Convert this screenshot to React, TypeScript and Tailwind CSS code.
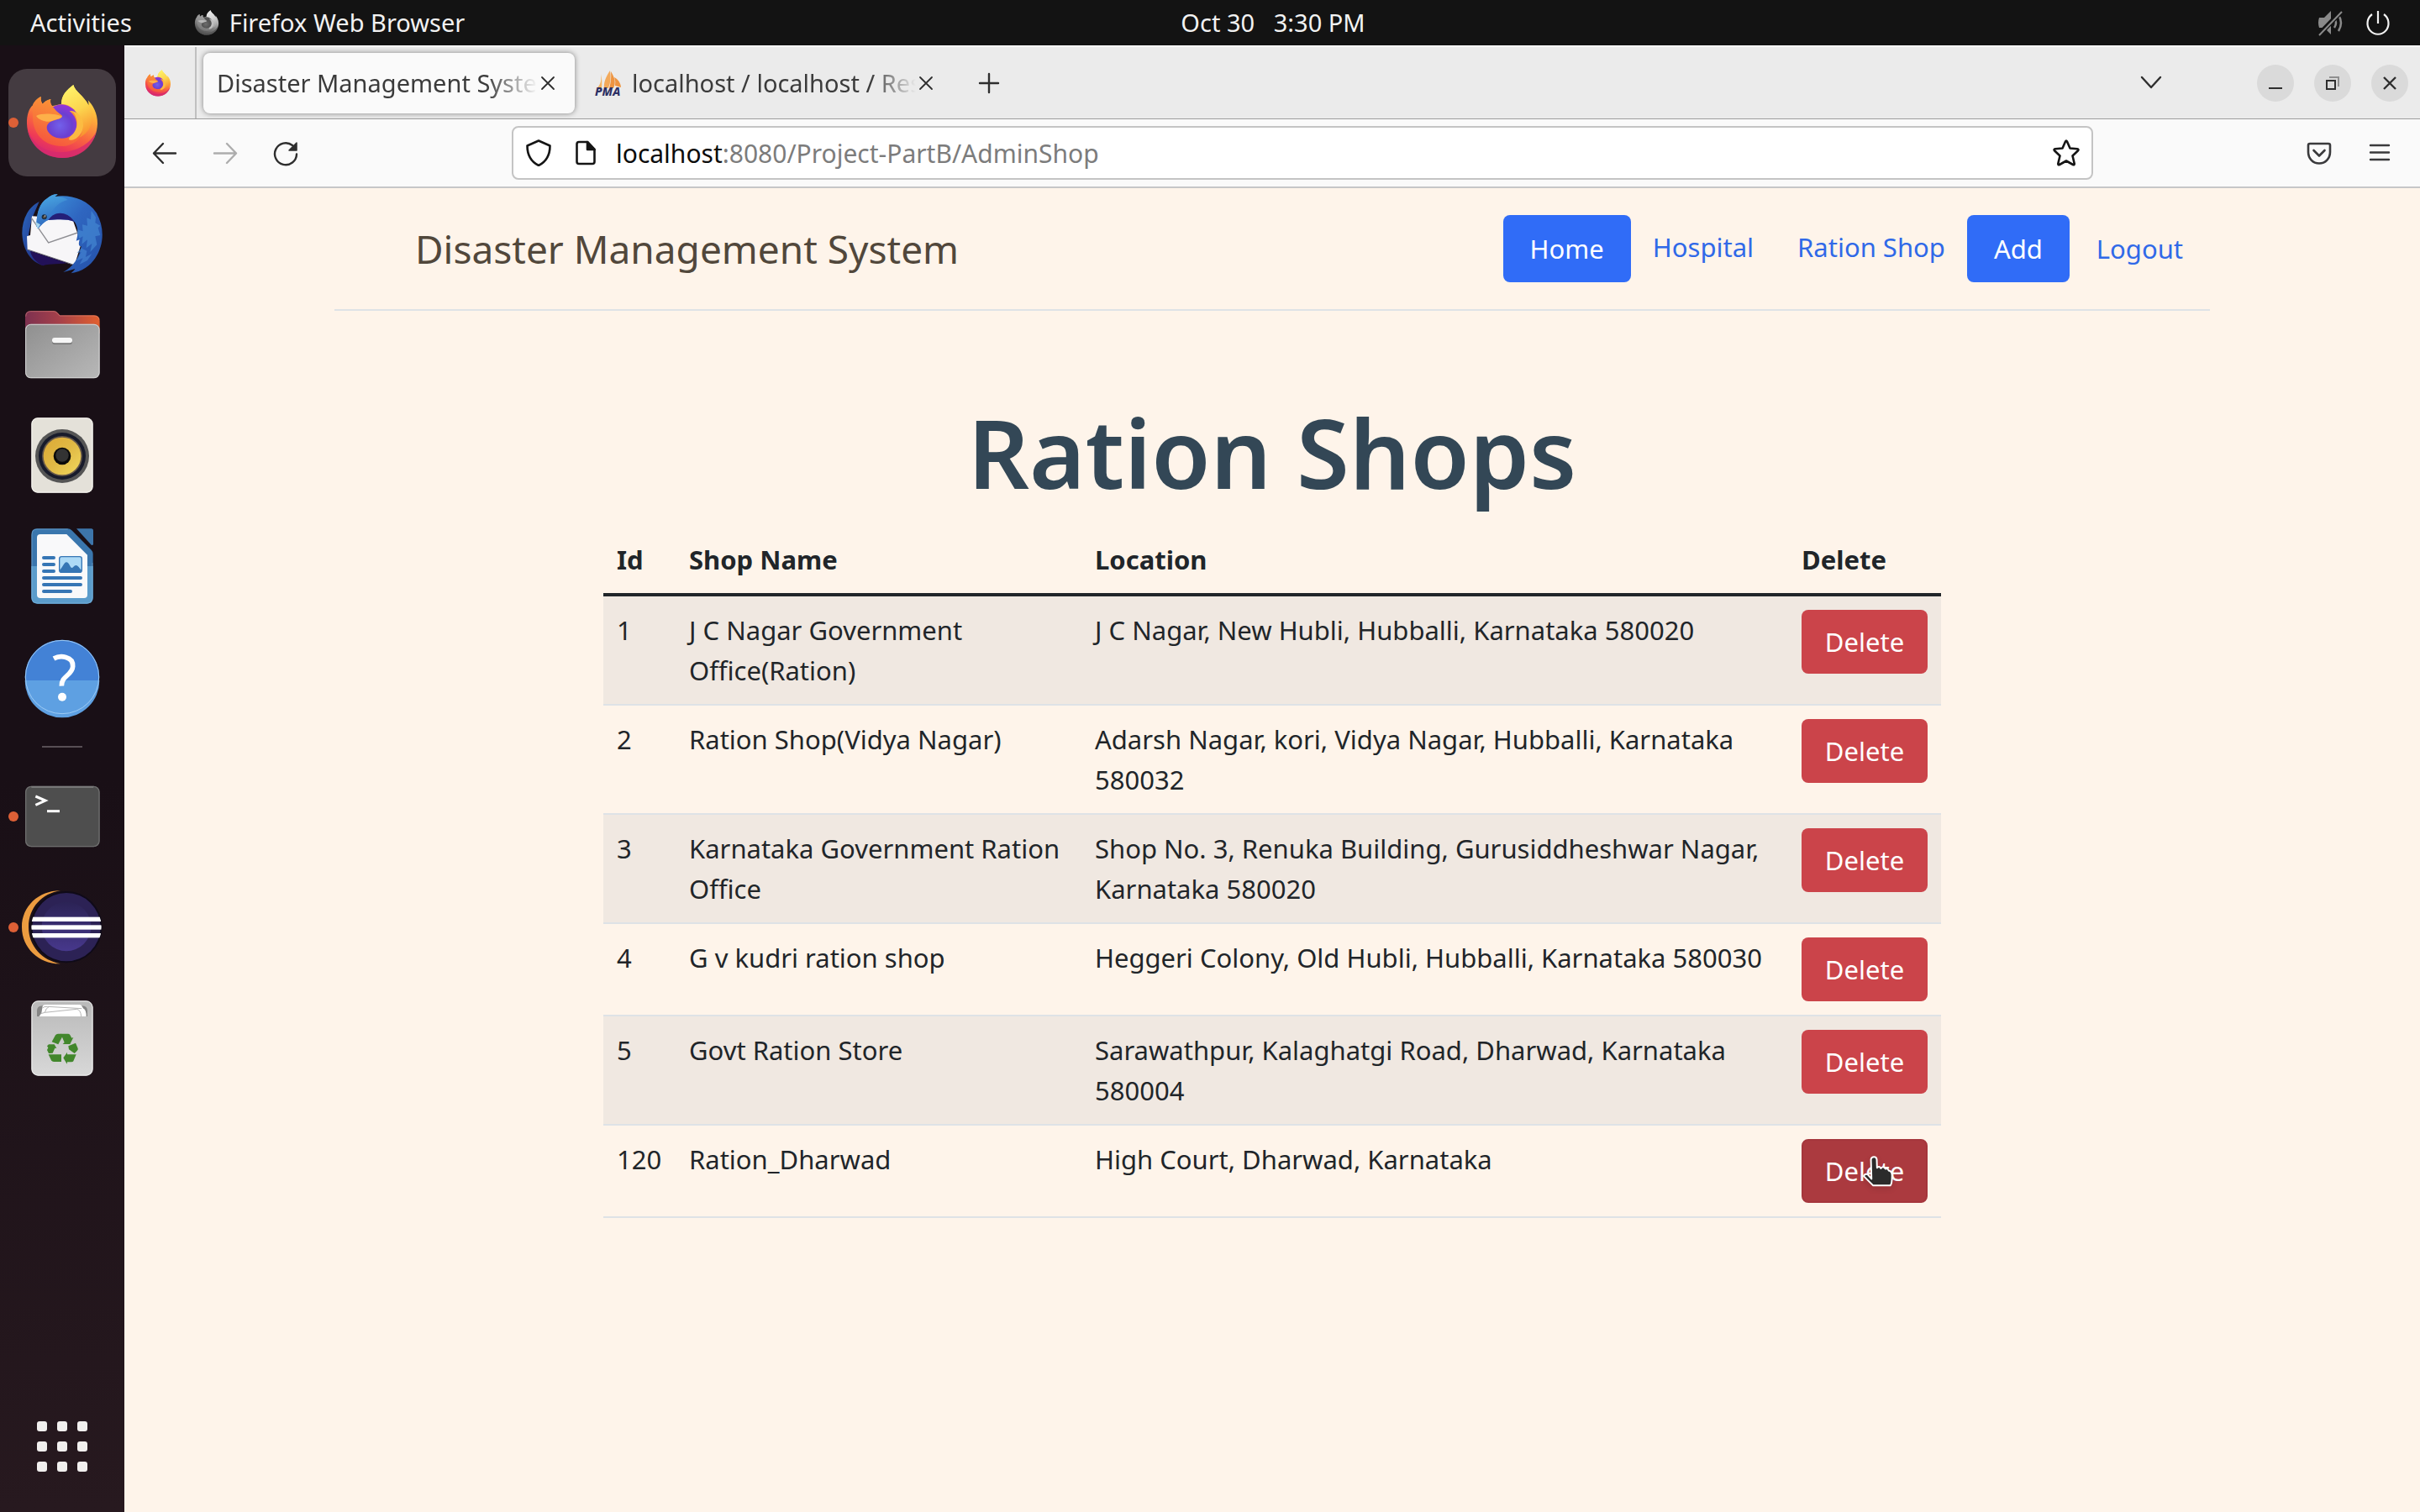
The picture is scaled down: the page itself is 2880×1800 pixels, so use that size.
import React from "react";

const shops = [
  { id: "1", name: "J C Nagar Government Office(Ration)", location: "J C Nagar, New Hubli, Hubballi, Karnataka 580020" },
  { id: "2", name: "Ration Shop(Vidya Nagar)", location: "Adarsh Nagar, kori, Vidya Nagar, Hubballi, Karnataka 580032" },
  { id: "3", name: "Karnataka Government Ration Office", location: "Shop No. 3, Renuka Building, Gurusiddheshwar Nagar, Karnataka 580020" },
  { id: "4", name: "G v kudri ration shop", location: "Heggeri Colony, Old Hubli, Hubballi, Karnataka 580030" },
  { id: "5", name: "Govt Ration Store", location: "Sarawathpur, Kalaghatgi Road, Dharwad, Karnataka 580004" },
  { id: "120", name: "Ration_Dharwad", location: "High Court, Dharwad, Karnataka" },
];

function FirefoxArt({ id }: { id: string }) {
  return (
    <>
      <defs>
        <linearGradient id={id + "body"} x1="0.75" y1="0.05" x2="0.35" y2="1">
          <stop offset="0" stopColor="#fff04f" />
          <stop offset="0.3" stopColor="#fdae3a" />
          <stop offset="0.6" stopColor="#f9663f" />
          <stop offset="0.82" stopColor="#ee3a56" />
          <stop offset="1" stopColor="#d32676" />
        </linearGradient>
        <linearGradient id={id + "flame"} x1="0.3" y1="0" x2="0.6" y2="1">
          <stop offset="0" stopColor="#fff36a" />
          <stop offset="0.5" stopColor="#fcd54e" />
          <stop offset="1" stopColor="#f9912f" />
        </linearGradient>
        <linearGradient id={id + "head"} x1="0.6" y1="0" x2="0.2" y2="1">
          <stop offset="0" stopColor="#fb9a35" />
          <stop offset="0.5" stopColor="#f87a3a" />
          <stop offset="1" stopColor="#f5503f" />
        </linearGradient>
        <radialGradient id={id + "globe"} cx="0.45" cy="0.62" r="0.65">
          <stop offset="0" stopColor="#7260ea" />
          <stop offset="0.55" stopColor="#6b3fd0" />
          <stop offset="1" stopColor="#9a35d8" />
        </radialGradient>
      </defs>
      <path d="M262 123C268 148 300 162 316 196C317 190 316 184 314 178C330 194 349 224 348 262C346 332 290 384 222 384C152 384 98 330 96 262C95 232 104 206 117 196C121 184 132 172 146 165C145 176 147 185 152 191C158 184 168 177 181 174C178 184 180 194 186 199L220 191C218 160 240 140 262 123Z" fill={"url(#" + id + "body)"} />
      <path d="M98 280C120 344 170 368 226 363C290 358 330 320 344 290C330 348 282 384 222 384C158 384 108 342 98 280Z" fill="#d42a6e" opacity="0.8" />
      <path d="M262 123C268 148 300 162 316 196C340 240 330 290 282 312C304 280 298 240 268 216C256 200 238 190 219 192C218 160 240 140 262 123Z" fill={"url(#" + id + "flame)"} />
      <circle cx="220" cy="254" r="61" fill={"url(#" + id + "globe)"} />
      <path d="M117 196C121 184 132 172 146 165C145 176 147 185 152 191C158 184 168 177 181 174C178 186 184 198 194 208C204 222 222 230 222 235C220 244 200 248 186 252C164 262 160 280 180 302C205 320 245 318 264 296C280 276 278 240 248 216C268 214 292 236 296 266C298 312 264 342 220 342C160 342 118 300 117 240Z" fill={"url(#" + id + "head)"} />
      <path d="M248 217C272 213 296 236 297 268C297 288 286 304 272 314C250 326 240 320 250 308C282 284 280 244 262 222Z" fill="#fcc544" opacity="0.85" />
      <path d="M129 234C150 222 200 226 222 236C216 246 198 245 186 252C172 258 140 252 129 234Z" fill="#fdb049" />
    </>
  );
}

function Firefox({ id, className }: { id: string; className: string }) {
  return (
    <svg viewBox="90 120 264 268" className={className} aria-hidden="true">
      <FirefoxArt id={id} />
    </svg>
  );
}

function DockItem({ label, viewBox, active, running, children }: { label: string; viewBox: string; active?: boolean; running?: boolean; children: React.ReactNode }) {
  return (
    <button aria-label={label} className={active ? "relative block size-32 rounded-[22px] bg-[#443b41]" : "relative block size-32 rounded-[22px]"}>
      {running && <span className="absolute top-[58px] left-0 size-3 rounded-full bg-[#dd6036]" />}
      <svg viewBox={viewBox} className="size-32" aria-hidden="true">{children}</svg>
    </button>
  );
}

function Dock() {
  return (
    <nav aria-label="Dock" className="flex w-[148px] shrink-0 flex-col items-center gap-1 bg-linear-to-b from-[#190f16] from-50% to-[#27191f] pt-7 pb-[14px]">
      <DockItem label="Firefox" viewBox="30 66 384 384" active running>
        <FirefoxArt id="dockfx" />
      </DockItem>

      <DockItem label="Thunderbird" viewBox="30 462 384 384">
        <defs>
          <linearGradient id="tb1" x1="0" y1="0" x2="1" y2="1">
            <stop offset="0" stopColor="#3f9be0" />
            <stop offset="0.45" stopColor="#2f66c0" />
            <stop offset="1" stopColor="#2450a8" />
          </linearGradient>
          <linearGradient id="tb2" x1="0" y1="0" x2="1" y2="1">
            <stop offset="0" stopColor="#2b6cc4" />
            <stop offset="1" stopColor="#1f1f72" />
          </linearGradient>
          <linearGradient id="tb3" x1="0.2" y1="0" x2="0.5" y2="1">
            <stop offset="0" stopColor="#4aa9e4" />
            <stop offset="1" stopColor="#2d62bb" />
          </linearGradient>
        </defs>
        <path d="M140 540C100 560 78 605 79 655C82 715 110 755 154 769C120 735 112 712 108 690C96 670 104 650 114 600Z" fill="url(#tb2)" />
        <path d="M114 592L258 600L290 690L266 767L98 712L96 664L108 660Z" fill="#f7f6f8" />
        <path d="M112 598L173 687L286 648" fill="none" stroke="#8e8e93" strokeWidth="4" />
        <path d="M98 711L264 766" stroke="#6b6b75" strokeWidth="3" />
        <path d="M108 716L240 760C200 764 170 762 154 769C128 756 112 738 108 716Z" fill="#221158" />
        <path d="M130 628C130 590 138 548 166 530C182 516 196 512 206 514L196 522C250 514 310 530 344 580C372 628 374 690 340 742C322 770 292 790 254 796C262 788 266 784 268 780L226 792C262 772 284 740 290 700C280 700 280 690 284 676L272 680C282 650 276 626 266 612C240 600 200 604 172 606C156 612 146 626 136 636Z" fill="url(#tb1)" />
        <path d="M130 628C130 590 138 548 166 530C182 516 196 512 206 514L196 522C216 522 232 526 242 534C206 542 182 570 172 606C156 612 146 626 136 636Z" fill="url(#tb3)" />
        <path d="M172 606C196 570 240 574 266 612C240 600 200 604 172 606Z" fill="#241f78" />
        <path d="M326 572L324 604L310 598L312 626L294 622L296 646L276 640L282 672L296 664L292 692L312 676L308 706L328 690L322 720L346 694L340 664L358 660L350 634L358 626L340 616L342 596Z" fill="#4a94da" opacity="0.55" />
        <path d="M290 706L274 724L290 720L272 752L296 742L284 764L312 750L328 726L306 738L310 716Z" fill="#4789d6" opacity="0.6" />
        <path d="M126 612L144 622L134 638Z" fill="#a7d5ec" />
        <circle cx="158" cy="595" r="9" fill="#1b2a3c" />
        <circle cx="158" cy="595" r="5" fill="#5b5446" />
        <circle cx="161" cy="591" r="2" fill="#ffffff" />
      </DockItem>

      <DockItem label="Files" viewBox="30 858 384 384">
        <defs>
          <linearGradient id="fo1" x1="0" y1="0" x2="1" y2="0">
            <stop offset="0" stopColor="#7d3150" />
            <stop offset="0.45" stopColor="#a5404a" />
            <stop offset="1" stopColor="#e2602f" />
          </linearGradient>
          <linearGradient id="fo2" x1="0" y1="0" x2="1" y2="1">
            <stop offset="0" stopColor="#8f8f8f" />
            <stop offset="1" stopColor="#b8b8b8" />
          </linearGradient>
        </defs>
        <path d="M90 1010V950Q90 930 110 930H192Q200 930 205 936L214 946H336Q356 946 356 966V1010Z" fill="url(#fo1)" />
        <path d="M92 950Q93 932 110 932H192Q199 932 204 938L213 948H336Q352 948 354 962" fill="none" stroke="#e99a86" strokeWidth="2" opacity="0.7" />
        <rect x="90" y="977" width="266" height="194" rx="20" fill="url(#fo2)" />
        <rect x="92" y="979" width="262" height="190" rx="18" fill="none" stroke="#d3d3d3" strokeWidth="3" />
        <rect x="186" y="1031" width="72" height="19" rx="9" fill="#777777" />
        <rect x="186" y="1026" width="72" height="19" rx="9" fill="#f6f6f6" />
      </DockItem>

      <DockItem label="Rhythmbox" viewBox="30 24 384 384">
        <defs>
          <linearGradient id="rb" x1="0" y1="0" x2="1" y2="1">
            <stop offset="0" stopColor="#dda935" />
            <stop offset="0.5" stopColor="#e0b945" />
            <stop offset="1" stopColor="#f2d95e" />
          </linearGradient>
        </defs>
        <rect x="112" y="82" width="220" height="268" rx="22" fill="#e4e1d9" />
        <rect x="114" y="84" width="216" height="264" rx="20" fill="none" stroke="#f6f5f1" strokeWidth="3" />
        <circle cx="222" cy="219" r="96" fill="#555555" />
        <circle cx="222" cy="219" r="84" fill="#181b2b" />
        <circle cx="222" cy="219" r="72" fill="#66584a" />
        <circle cx="222" cy="219" r="67" fill="url(#rb)" />
        <circle cx="222" cy="219" r="31" fill="#0a0a0a" />
        <circle cx="222" cy="216" r="23" fill="#333333" />
      </DockItem>

      <DockItem label="LibreOffice Writer" viewBox="30 420 384 384">
        <path d="M132 478H242Q250 478 256 484L326 554Q332 560 332 568V724Q332 746 310 746H134Q112 746 112 724V500Q112 478 132 478Z" fill="#3a76ad" />
        <path d="M112 612H332V724Q332 746 310 746H134Q112 746 112 724Z" fill="#5b9ccb" />
        <path d="M114 724V500Q114 480 132 480H242M330 600V724Q330 744 310 744H134Q114 744 114 724" fill="none" stroke="#8fc0e0" strokeWidth="2" opacity="0.7" />
        <path d="M273 478H326Q333 478 333 486V532Q333 540 326 536Z" fill="#3d75aa" />
        <path d="M144 498H238L312 572V714Q312 726 300 726H144Q132 726 132 714V510Q132 498 144 498Z" fill="#f9f9fa" />
        <g stroke="#3676b5" strokeWidth="12" strokeLinecap="round">
          <path d="M156 582H192M156 606H192M156 630H192M156 654H288M156 678H288M156 702H252" />
        </g>
        <rect x="212" y="578" width="80" height="56" rx="8" fill="#addaf6" stroke="#3676b5" strokeWidth="4" />
        <path d="M213 626C222 620 228 598 237 598C247 598 250 618 257 618C262 618 264 609 271 609C280 609 284 622 291 626V630Q291 634 286 634H218Q213 634 213 628Z" fill="#3676b5" />
      </DockItem>

      <DockItem label="Help" viewBox="30 816 384 384">
        <circle cx="222" cy="1008" r="133" fill="#4382d6" />
        <path d="M89 1020H355A133 133 0 0 1 89 1020Z" fill="#5ea0e2" />
        <circle cx="222" cy="1008" r="131" fill="none" stroke="#9dcbf5" strokeWidth="3" />
        <path d="M192 942C214 930 262 932 260 970C258 1002 218 1004 220 1040" fill="none" stroke="#ffffff" strokeWidth="17" />
        <circle cx="222" cy="1079" r="15" fill="#ffffff" />
      </DockItem>

      <div className="my-[14px] h-0.5 w-12 bg-[#574e54]" />

      <DockItem label="Terminal" viewBox="30 84 384 384" running>
        <rect x="90" y="167" width="266" height="218" rx="22" fill="#4e4e4e" />
        <rect x="92" y="169" width="262" height="214" rx="20" fill="none" stroke="#6d6d6d" strokeWidth="4" />
        <path d="M112 171H334" stroke="#828282" strokeWidth="4" />
        <path d="M127 204L162 219L127 235" fill="none" stroke="#ffffff" strokeWidth="9" />
        <path d="M168 257H213" stroke="#ffffff" strokeWidth="9" />
      </DockItem>

      <DockItem label="Eclipse" viewBox="30 480 384 384" running>
        <defs>
          <linearGradient id="ec" x1="0" y1="0" x2="0" y2="1">
            <stop offset="0" stopColor="#2b2355" />
            <stop offset="1" stopColor="#47388c" />
          </linearGradient>
          <clipPath id="ecclip"><circle cx="237" cy="671" r="125" /></clipPath>
        </defs>
        <path d="M216 541C140 540 78 596 78 671C78 746 140 804 216 802C152 790 102 740 102 671C102 602 150 550 216 541Z" fill="#ec9c40" />
        <circle cx="237" cy="671" r="128" fill="#0f0a18" />
        <circle cx="237" cy="671" r="122" fill="#2c2255" />
        <circle cx="237" cy="669" r="88" fill="url(#ec)" />
        <g clipPath="url(#ecclip)" fill="#ffffff">
          <rect x="110" y="635" width="254" height="16" />
          <rect x="110" y="664" width="254" height="16" />
          <rect x="110" y="693" width="254" height="16" />
        </g>
      </DockItem>

      <DockItem label="Trash" viewBox="30 876 384 384">
        <defs>
          <linearGradient id="tr" x1="0" y1="0" x2="0" y2="1">
            <stop offset="0" stopColor="#b9b9b9" />
            <stop offset="1" stopColor="#d8d8d8" />
          </linearGradient>
        </defs>
        <rect x="112" y="934" width="220" height="268" rx="24" fill="url(#tr)" />
        <rect x="114" y="936" width="216" height="264" rx="22" fill="none" stroke="#eeeeee" strokeWidth="3" />
        <path d="M132 990V970Q132 952 152 952H292Q312 952 312 970V990Z" fill="#858585" />
        <path d="M148 978L152 954Q154 948 162 948H284Q292 948 294 956L298 962Q308 966 308 990H140Z" fill="#ffffff" />
        <path d="M152 960Q156 954 170 955L292 962M146 980L160 976L274 964Q288 966 290 990M160 976Q164 960 174 956" fill="none" stroke="#b5b5b5" strokeWidth="3" />
        <g fill="#42872c">
          <path d="M185 1081L198 1057Q201 1052 207 1052H219L224 1060L208 1090Z" />
          <path d="M217 1052H243Q247 1052 250 1056L256 1067L262 1065L250 1089H224L230 1083Z" />
          <path d="M270 1085L278 1104Q280 1109 275 1113L266 1122L246 1108L244 1096Z" />
          <path d="M272 1126L262 1150Q260 1153 255 1153H240L239 1160L226 1138L240 1118V1126Z" />
          <path d="M173 1126H219V1152H192Q186 1152 183 1147Z" />
          <path d="M168 1096L174 1090L194 1090L202 1104L196 1103L188 1121L174 1122L168 1110L172 1102Z" />
        </g>
      </DockItem>

      <button aria-label="Show Applications" className="mt-auto grid size-32 grid-cols-[auto_auto_auto] place-content-center gap-3">
        {Array.from({ length: 9 }, (_, i) => (
          <span key={i} className="size-3 rounded-[3px] bg-[#f1efee]" />
        ))}
      </button>
    </nav>
  );
}

function TopBar() {
  return (
    <header className="grid h-[54px] shrink-0 grid-cols-[1fr_auto_1fr] items-center bg-[#131313] pr-[34px] pl-9 text-[29px] leading-10 text-[#f2f2f2]">
      <div className="flex items-center">
        <button>Activities</button>
        <button className="ml-[74px] flex items-center gap-3">
          <Firefox id="topfx" className="size-[30px] grayscale" />
          Firefox Web Browser
        </button>
      </div>
      <button className="pl-[148px] whitespace-pre">Oct 30{"   "}3:30 PM</button>
      <div className="flex items-center justify-end gap-6">
        <svg viewBox="0 0 32 32" className="size-8" fill="none" aria-label="Muted" role="img">
          <path d="M2 10H8L16 2V30L8 22H2Q0 16 2 10Z" fill="#8a8a8a" />
          <path d="M20 11Q24 16 20 22M25 7Q31 16 25 26" stroke="#8a8a8a" strokeWidth="2.5" />
          <path d="M1 31L30 1" stroke="#131313" strokeWidth="6" />
          <path d="M2 31L29 3" stroke="#8a8a8a" strokeWidth="2" />
        </svg>
        <svg viewBox="0 0 32 32" className="size-8" fill="none" stroke="#f2f2f2" strokeWidth="2.2" aria-label="Power" role="img">
          <path d="M16 2V17M9 6A12.5 13 0 1 0 23 6" />
        </svg>
      </div>
    </header>
  );
}

function CloseGlyph() {
  return (
    <svg viewBox="0 0 24 24" className="size-6" fill="none" stroke="#2e2e2e" strokeWidth="1.8" strokeLinecap="round" aria-hidden="true">
      <path d="M5 5L19 19M19 5L5 19" />
    </svg>
  );
}

const fade = "min-w-0 flex-1 overflow-hidden whitespace-nowrap text-left [mask-image:linear-gradient(to_right,black_84%,transparent)]";

function TabStrip() {
  return (
    <div className="flex h-[88px] shrink-0 items-center border-t-2 border-b border-t-white border-b-[#9d9d9d] bg-[#ebebeb] pr-[14px] text-[29px] text-[#3b3b3b]">
      <button aria-label="Pinned tab" className="flex h-full w-[86px] items-center justify-center border-r-2 border-[#c0c0c0] pr-1">
        <Firefox id="tabfx" className="size-8" />
      </button>
      <div className="ml-2 flex h-[72px] w-[442px] items-center rounded-lg bg-[#fafafa] pr-5 pl-4 shadow-[0_0_6px_rgba(0,0,0,0.45)]">
        <button className={fade}>Disaster Management System</button>
        <button aria-label="Close tab"><CloseGlyph /></button>
      </div>
      <div className="ml-2 flex h-[72px] w-[442px] items-center pr-5 pl-4">
        <svg viewBox="0 0 32 32" className="mr-3 size-8 shrink-0 overflow-visible" aria-hidden="true">
          <path d="M7 5C8 12 7 18 2 22H8Q9 12 7 5Z" fill="#f4b565" />
          <path d="M18 1C13 8 10 16 11 22H16Q20 12 18 1Z" fill="#f3a95a" />
          <path d="M19 2C24 10 25 16 22 22H17Q20 12 19 2ZM23 9C29 12 31 18 31 21L24 19Q25 14 23 9Z" fill="#ee9440" />
          <text x="0" y="31" fontSize="14" fontWeight="800" fontStyle="italic" fontFamily="Noto Sans, sans-serif" fill="#2c2f63">PMA</text>
        </svg>
        <button className={fade}>localhost / localhost / Resource</button>
        <button aria-label="Close tab"><CloseGlyph /></button>
      </div>
      <button aria-label="New tab" className="ml-[27px]">
        <svg viewBox="0 0 32 32" className="size-8" stroke="#2e2e2e" strokeWidth="2.4" strokeLinecap="round" aria-hidden="true">
          <path d="M16 5V27M5 16H27" />
        </svg>
      </button>
      <button aria-label="List all tabs" className="mr-[110px] ml-auto">
        <svg viewBox="0 0 32 32" className="size-8" fill="none" stroke="#2e2e2e" strokeWidth="2.4" strokeLinecap="round" strokeLinejoin="round" aria-hidden="true">
          <path d="M5 9L16 21L27 9" />
        </svg>
      </button>
      <div className="flex gap-6">
        <button aria-label="Minimize" className="size-11 rounded-full bg-[#dadada]">
          <svg viewBox="0 0 44 44" className="size-11" stroke="#2e2e2e" strokeWidth="2" aria-hidden="true"><path d="M14 28H30" /></svg>
        </button>
        <button aria-label="Restore" className="size-11 rounded-full bg-[#dadada]">
          <svg viewBox="0 0 44 44" className="size-11" fill="none" strokeWidth="2" aria-hidden="true">
            <path d="M18 15H29V26" stroke="#8f8f8f" />
            <rect x="15" y="19" width="10" height="10" stroke="#2e2e2e" />
          </svg>
        </button>
        <button aria-label="Close window" className="size-11 rounded-full bg-[#dadada]">
          <svg viewBox="0 0 44 44" className="size-11" stroke="#2e2e2e" strokeWidth="2.4" aria-hidden="true"><path d="M15 15L29 29M29 15L15 29" /></svg>
        </button>
      </div>
    </div>
  );
}

function Toolbar() {
  return (
    <div className="flex h-[82px] shrink-0 items-center border-b-2 border-[#c6c6c8] bg-[#fafafa] px-8">
      <div className="flex gap-10">
        <button aria-label="Back">
          <svg viewBox="0 0 32 32" className="size-8" fill="none" stroke="#2e2e2e" strokeWidth="2.4" strokeLinecap="round" strokeLinejoin="round" aria-hidden="true"><path d="M29 16.5H3M14 5L3 16.5L14 28" /></svg>
        </button>
        <button aria-label="Forward" disabled>
          <svg viewBox="0 0 32 32" className="size-8" fill="none" stroke="#adadad" strokeWidth="2.4" strokeLinecap="round" strokeLinejoin="round" aria-hidden="true"><path d="M3 16.5H29M18 5L29 16.5L18 28" /></svg>
        </button>
        <button aria-label="Reload">
          <svg viewBox="0 0 32 32" className="size-8" fill="none" stroke="#2e2e2e" strokeWidth="2.4" strokeLinecap="round" aria-hidden="true">
            <path d="M29 17.5A13 13 0 1 1 24 7" />
            <path d="M29 4V13H20Z" fill="#2e2e2e" stroke="#2e2e2e" strokeWidth="1.5" strokeLinejoin="round" />
          </svg>
        </button>
      </div>
      <div className="mx-[253px] flex h-16 min-w-0 flex-1 items-center rounded-lg border-2 border-[#c4c4c4] bg-white pr-3.5 pl-[14px] text-[30px]">
        <svg viewBox="0 0 32 32" className="size-8" fill="none" stroke="#151515" strokeWidth="2.6" strokeLinejoin="round" aria-hidden="true">
          <path d="M16 1.5L29.5 7.5C29.5 18 26 26 16 31C6 26 2.500 18 2.500 7.500Z" />
        </svg>
        <svg viewBox="0 0 32 32" className="ml-6 size-8" fill="none" stroke="#151515" strokeWidth="2.6" strokeLinejoin="round" aria-hidden="true">
          <path d="M18 3H8Q5.500 3 5.500 5.500V26.500Q5.500 29 8 29H24Q26.500 29 26.500 26.500V12Z" />
          <path d="M18 3L26.500 12H18Z" fill="#151515" />
        </svg>
        <label htmlFor="url" className="ml-5 text-[#0c0c0c]">localhost</label>
        <input id="url" defaultValue=":8080/Project-PartB/AdminShop" className="min-w-0 flex-1 text-[#7c7c7c] outline-none" />
        <button aria-label="Bookmark this page">
          <svg viewBox="0 0 32 32" className="size-8" fill="none" stroke="#151515" strokeWidth="2.6" strokeLinejoin="round" aria-hidden="true">
            <path d="M15 2.500Q16 0.500 17 2.500L20.500 10.500L29 11.300Q31.500 11.800 29.800 13.500L23.500 19.500L25.700 28.800Q25.800 31 24 30L16 25.500L8 30Q6.200 31 6.300 28.800L8.500 19.500L2.200 13.500Q0.500 11.800 3 11.300L11.500 10.500Z" />
          </svg>
        </button>
      </div>
      <div className="flex gap-10">
        <button aria-label="Save to Pocket">
          <svg viewBox="0 0 32 32" className="size-8" fill="none" stroke="#3a3a3c" strokeWidth="2.6" strokeLinecap="round" strokeLinejoin="round" aria-hidden="true">
            <path d="M5 5H27Q29 5 29 7V15C29 22.500 23.500 28.500 16 28.500C8.500 28.500 3 22.500 3 15V7Q3 5 5 5Z" />
            <path d="M9.500 13L16 19.500L22.500 13" />
          </svg>
        </button>
        <button aria-label="Open application menu">
          <svg viewBox="0 0 32 32" className="size-8" stroke="#3a3a3c" strokeWidth="2.4" strokeLinecap="round" aria-hidden="true"><path d="M5 7H27M5 15.500H27M5 24H27" /></svg>
        </button>
      </div>
    </div>
  );
}

function HandCursor() {
  return (
    <svg viewBox="944 880 112 124" className="pointer-events-none absolute top-[17px] left-[70px] h-[41px] w-[37px] drop-shadow-md" aria-hidden="true">
      <path d="M978 966L976 896Q978 887 987 887Q996 887 997 896L998 926Q1006 918 1012 928Q1020 918 1028 930Q1036 926 1040 936Q1052 938 1052 954Q1052 984 1046 990H984L950 956Q954 946 964 950Z" fill="#2b2b2b" stroke="#ffffff" strokeWidth="6" strokeLinejoin="round" />
    </svg>
  );
}

function ShopPage() {
  return (
    <main className="min-h-0 flex-1 overflow-hidden bg-[#fef4ea] text-[31px] leading-[48px] text-[#212529]">
      <div className="mx-auto flex max-w-[2232px] items-center justify-between border-b-2 border-[#dee2e6] py-8 pl-24">
        <div className="text-[46px] text-[#51473b]">Disaster Management System</div>
        <nav aria-label="Main" className="flex items-start text-[#3069e8]">
          <a href="#home" className="rounded-lg bg-[#306cf7] px-8 py-4 text-white">Home</a>
          <a href="#hospital" className="px-[26px] py-3.5">Hospital</a>
          <a href="#ration" className="px-[26px] py-3.5">Ration Shop</a>
          <a href="#add" className="rounded-lg bg-[#306cf7] px-8 py-4 text-white">Add</a>
          <a href="#logout" className="px-8 py-4">Logout</a>
        </nav>
      </div>
      <section className="mx-auto max-w-[1592px]">
        <h1 className="mt-24 mb-4 text-center text-[114px] leading-[144px] font-semibold text-[#334756]">Ration Shops</h1>
        <table className="w-full table-fixed border-separate border-spacing-0 text-left">
          <colgroup>
            <col className="w-[86px]" />
            <col className="w-[483px]" />
            <col />
            <col className="w-[182px]" />
          </colgroup>
          <thead>
            <tr className="*:border-b-4 *:border-[#212529] *:px-4 *:py-4 *:font-bold">
              <th scope="col">Id</th>
              <th scope="col">Shop Name</th>
              <th scope="col">Location</th>
              <th scope="col">Delete</th>
            </tr>
          </thead>
          <tbody>
            {shops.map((shop, i) => (
              <tr key={shop.id} className="align-top *:border-b-2 *:border-[#dee2e6] *:p-4 odd:bg-[#f0e8e1]">
                <td>{shop.id}</td>
                <td>{shop.name}</td>
                <td>{shop.location}</td>
                <td>
                  {i === shops.length - 1 ? (
                    <button className="relative block h-[76px] w-full rounded-lg border-2 border-[#a5363c] bg-[#ab3a3f] text-white">
                      Delete
                      <HandCursor />
                    </button>
                  ) : (
                    <button className="block h-[76px] w-full rounded-lg bg-[#cb444a] text-white">Delete</button>
                  )}
                </td>
              </tr>
            ))}
          </tbody>
        </table>
      </section>
    </main>
  );
}

export default function App() {
  return (
    <div className="flex h-screen flex-col font-['Noto_Sans',sans-serif]">
      <TopBar />
      <div className="flex min-h-0 flex-1">
        <Dock />
        <div className="flex min-w-0 flex-1 flex-col">
          <TabStrip />
          <Toolbar />
          <ShopPage />
        </div>
      </div>
    </div>
  );
}
